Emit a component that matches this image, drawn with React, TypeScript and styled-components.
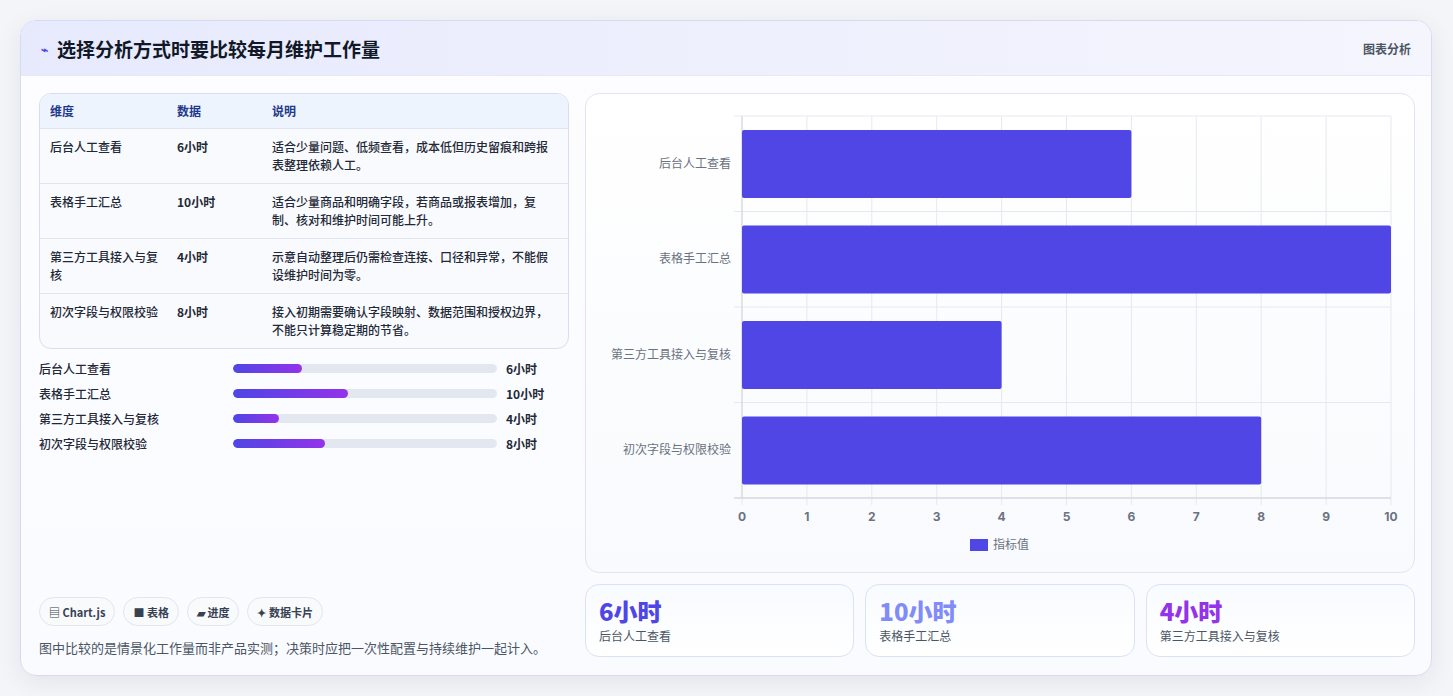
import React from "react";
import styled, { createGlobalStyle } from "styled-components";

const Global = createGlobalStyle`
  body { margin: 0; background: #f4f5f8; font-family: "Noto Sans CJK SC", "Noto Sans", sans-serif; }
  * { box-sizing: border-box; }
`;
const Page = styled.div`padding: 20px 21px 20px 20px; height: 696px;`;
const Card = styled.div`
  height: 656px; background: linear-gradient(180deg,#fdfdff,#f9fbff); border: 1px solid #d6dcf0;
  border-radius: 16px; box-shadow: 0 6px 24px rgba(30,40,90,.08); overflow: hidden; display: flex; flex-direction: column;
`;
const Header = styled.div`
  height: 55px; flex: none; display: flex; align-items: center; justify-content: space-between;
  padding: 0 20px; background: linear-gradient(90deg,#e7eafd,#f4f5fd); border-bottom: 1px solid #e6e9f5;
`;
const Title = styled.h1`margin: 0; font-size: 19px; font-weight: 700; color: #111827; display: flex; align-items: center; gap: 9px;`;
const HeaderTag = styled.span`font-size: 12px; font-weight: 700; color: #4b5563;`;
const Body = styled.div`flex: 1; display: grid; grid-template-columns: 530px 1fr; gap: 16px; padding: 17px 18px 18px 18px;`;
const Left = styled.div`display: flex; flex-direction: column;`;
const Table = styled.div`border: 1px solid #d8deeb; border-radius: 12px; overflow: hidden; background: #f8fafd;`;
const Row = styled.div<{ head?: boolean }>`
  display: grid; grid-template-columns: 127px 95px 1fr; padding: ${p => p.head ? "8px 10px" : "9px 10px"};
  min-height: ${p => p.head ? "32px" : "53px"};
  font-size: 12px; line-height: 18px; font-weight: ${p => p.head ? 700 : 500};
  color: ${p => p.head ? "#1e3a8a" : "#1f2937"}; background: ${p => p.head ? "#eef4fd" : "transparent"};
  border-top: ${p => p.head ? "none" : "1px solid #dfe4ee"};
  & > span:first-child { padding-right: 14px; }
`;
const Bars = styled.div`display: flex; flex-direction: column; gap: 7px; margin-top: 10px;`;
const BarRow = styled.div`display: grid; grid-template-columns: 194px 264px 1fr; align-items: center; gap: 0; font-size: 12px; font-weight: 500; color: #1f2937; height: 18px;
  & > b { padding-left: 9px; font-weight: 700; }`;
const Track = styled.div`height: 9px; border-radius: 5px; background: #e3e8f0; overflow: hidden;`;
const Fill = styled.div`height: 100%; border-radius: 5px; background: linear-gradient(90deg,#4f46e5,#9333ea);`;
const Spacer = styled.div`flex: 1;`;
const Chips = styled.div`display: flex; gap: 8px;`;
const Chip = styled.span`height: 29px; padding: 0 9px; border: 1px solid #e1e6ef; border-radius: 15px; background: #f8fafc; font-size: 11px; font-weight: 700; color: #374151; display: flex; align-items: center; gap: 3px;`;
const Note = styled.p`margin: 12px 0 0; font-size: 13px; color: #4b5563;`;
const Right = styled.div`display: flex; flex-direction: column; gap: 11px;`;
const ChartPanel = styled.div`height: 480px; border: 1px solid #dfe5ef; border-radius: 14px; background: linear-gradient(180deg,#fff,#f8fafd);`;
const Stats = styled.div`display: grid; grid-template-columns: repeat(3,1fr); gap: 11px; flex: 1;`;
const Stat = styled.div`border: 1px solid #d9e3f3; border-radius: 14px; background: linear-gradient(180deg,#f8fbff,#fff); padding: 10px 13px;`;
const StatVal = styled.div<{ c: string }>`font-size: 24px; font-weight: 800; color: ${p => p.c}; line-height: 32px;`;
const StatLbl = styled.div`font-size: 12px; color: #4b5563; margin-top: 0;`;

const rows = [
  ["后台人工查看", "6小时", "适合少量问题、低频查看，成本低但历史留痕和跨报表整理依赖人工。", 6],
  ["表格手工汇总", "10小时", "适合少量商品和明确字段，若商品或报表增加，复制、核对和维护时间可能上升。", 10],
  ["第三方工具接入与复核", "4小时", "示意自动整理后仍需检查连接、口径和异常，不能假设维护时间为零。", 4],
  ["初次字段与权限校验", "8小时", "接入初期需要确认字段映射、数据范围和授权边界，不能只计算稳定期的节省。", 8],
] as const;

function Chart() {
  const x0 = 156, x1 = 805, y0 = 22, y1 = 404;
  const u = (x1 - x0) / 10, band = (y1 - y0) / 4;
  return (
    <svg width="828" height="478" style={{ display: "block" }}>
      {Array.from({ length: 11 }, (_, i) => (
        <line key={i} x1={x0 + u * i} x2={x0 + u * i} y1={y0} y2={y1 + 7} stroke="#e5e9ef" />
      ))}
      {[0, 1, 2, 3, 4].map(i => (
        <line key={i} x1={x0 - 8} x2={x1} y1={y0 + band * i} y2={y0 + band * i} stroke="#e5e9ef" />
      ))}
      <line x1={x0} x2={x0} y1={y0} y2={y1} stroke="#d1d5db" />
      <line x1={x0 - 8} x2={x1} y1={y1} y2={y1} stroke="#cbd0d8" />
      {rows.map((r, i) => (
        <g key={i}>
          <rect x={x0} y={y0 + band * i + 14} width={u * (r[3] as number)} height={68} fill="#4f46e5" rx="2" />
          <text x={x0 - 11} y={y0 + band * i + band / 2 + 4} textAnchor="end" fontSize="12" fill="#6b7280">{r[0]}</text>
        </g>
      ))}
      {Array.from({ length: 11 }, (_, i) => (
        <text key={i} x={x0 + u * i} y={427} textAnchor="middle" fontSize="12" fontWeight="700" fill="#6b7280" fontFamily="Inter, sans-serif">{i}</text>
      ))}
      <rect x={384} y={445} width={18} height={12} fill="#4f46e5" />
      <text x={407} y={455} fontSize="12" fill="#6b7280">指标值</text>
    </svg>
  );
}

export default function App() {
  return (
    <Page>
      <Global />
      <Card>
        <Header>
          <Title><span style={{ color: "#4f46e5", fontSize: 12 }}>⌁</span>选择分析方式时要比较每月维护工作量</Title>
          <HeaderTag>图表分析</HeaderTag>
        </Header>
        <Body>
          <Left>
            <Table>
              <Row head><span>维度</span><span>数据</span><span>说明</span></Row>
              {rows.map(r => <Row key={r[0]}><span>{r[0]}</span><span style={{ fontWeight: 700 }}>{r[1]}</span><span>{r[2]}</span></Row>)}
            </Table>
            <Bars>
              {rows.map(r => (
                <BarRow key={r[0]}><span>{r[0]}</span><Track><Fill style={{ width: `${(r[3] as number) * 4.37}%` }} /></Track><b>{r[1]}</b></BarRow>
              ))}
            </Bars>
            <Spacer />
            <Chips>
              <Chip>▤ Chart.js</Chip><Chip>■ 表格</Chip><Chip>▰ 进度</Chip><Chip>✦ 数据卡片</Chip>
            </Chips>
            <Note>图中比较的是情景化工作量而非产品实测；决策时应把一次性配置与持续维护一起计入。</Note>
          </Left>
          <Right>
            <ChartPanel><Chart /></ChartPanel>
            <Stats>
              <Stat><StatVal c="#4f46e5">6小时</StatVal><StatLbl>后台人工查看</StatLbl></Stat>
              <Stat><StatVal c="#818cf8">10小时</StatVal><StatLbl>表格手工汇总</StatLbl></Stat>
              <Stat><StatVal c="#9333ea">4小时</StatVal><StatLbl>第三方工具接入与复核</StatLbl></Stat>
            </Stats>
          </Right>
        </Body>
      </Card>
    </Page>
  );
}
